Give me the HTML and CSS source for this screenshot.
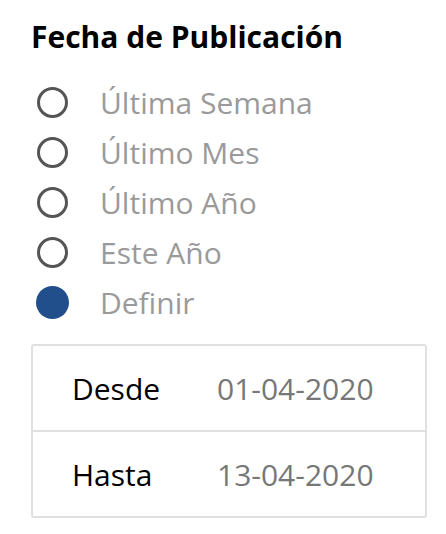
FILE: index.html
```html
<!DOCTYPE html>
<html lang="es">
<head>
<meta charset="utf-8">
<link rel="stylesheet" href="styles.css">
</head>
<body>
<section class="filter">
  <h2 class="title">Fecha de Publicación</h2>
  <ul class="options">
    <li class="option"><span class="radio"></span><span class="label">Última Semana</span></li>
    <li class="option"><span class="radio"></span><span class="label">Último Mes</span></li>
    <li class="option"><span class="radio"></span><span class="label">Último Año</span></li>
    <li class="option"><span class="radio"></span><span class="label">Este Año</span></li>
    <li class="option"><span class="radio checked"></span><span class="label">Definir</span></li>
  </ul>
  <div class="range">
    <div class="range-row"><span class="range-label">Desde</span><span class="range-value">01-04-2020</span></div>
    <div class="range-row"><span class="range-label">Hasta</span><span class="range-value">13-04-2020</span></div>
  </div>
</section>
</body>
</html>
```
FILE: styles.css
```css
html, body {
  margin: 0;
  padding: 0;
  background: #fff;
}
body {
  font-family: "Open Sans", "Noto Sans", sans-serif;
}
.filter {
  padding: 19px 19px 0 31px;
}
.title {
  margin: 0;
  font-size: 30px;
  font-weight: 700;
  color: #000;
  line-height: 36px;
}
.options {
  list-style: none;
  margin: 22px 0 0 0;
  padding: 0;
}
.option {
  display: flex;
  align-items: center;
  height: 50px;
}
.radio {
  box-sizing: border-box;
  width: 31px;
  height: 31px;
  border: 3.5px solid #555;
  border-radius: 50%;
  margin-left: 6px;
  flex: none;
}
.radio.checked {
  border: none;
  width: 33px;
  height: 33px;
  margin-left: 5px;
  background: #214f8c;
}
.label {
  margin-left: 32px;
  font-size: 30px;
  color: #9a9a9a;
}
.radio.checked + .label {
  margin-left: 31px;
}
.range {
  margin-top: 17px;
  border: 2px solid #e0e0e0;
  border-radius: 3px;
}
.range-row {
  display: flex;
  align-items: center;
  height: 84px;
  padding-left: 39px;
  font-size: 30px;
}
.range-row + .range-row {
  border-top: 2px solid #e0e0e0;
}
.range-label {
  width: 145px;
  color: #000;
}
.range-value {
  color: #777;
}
```
